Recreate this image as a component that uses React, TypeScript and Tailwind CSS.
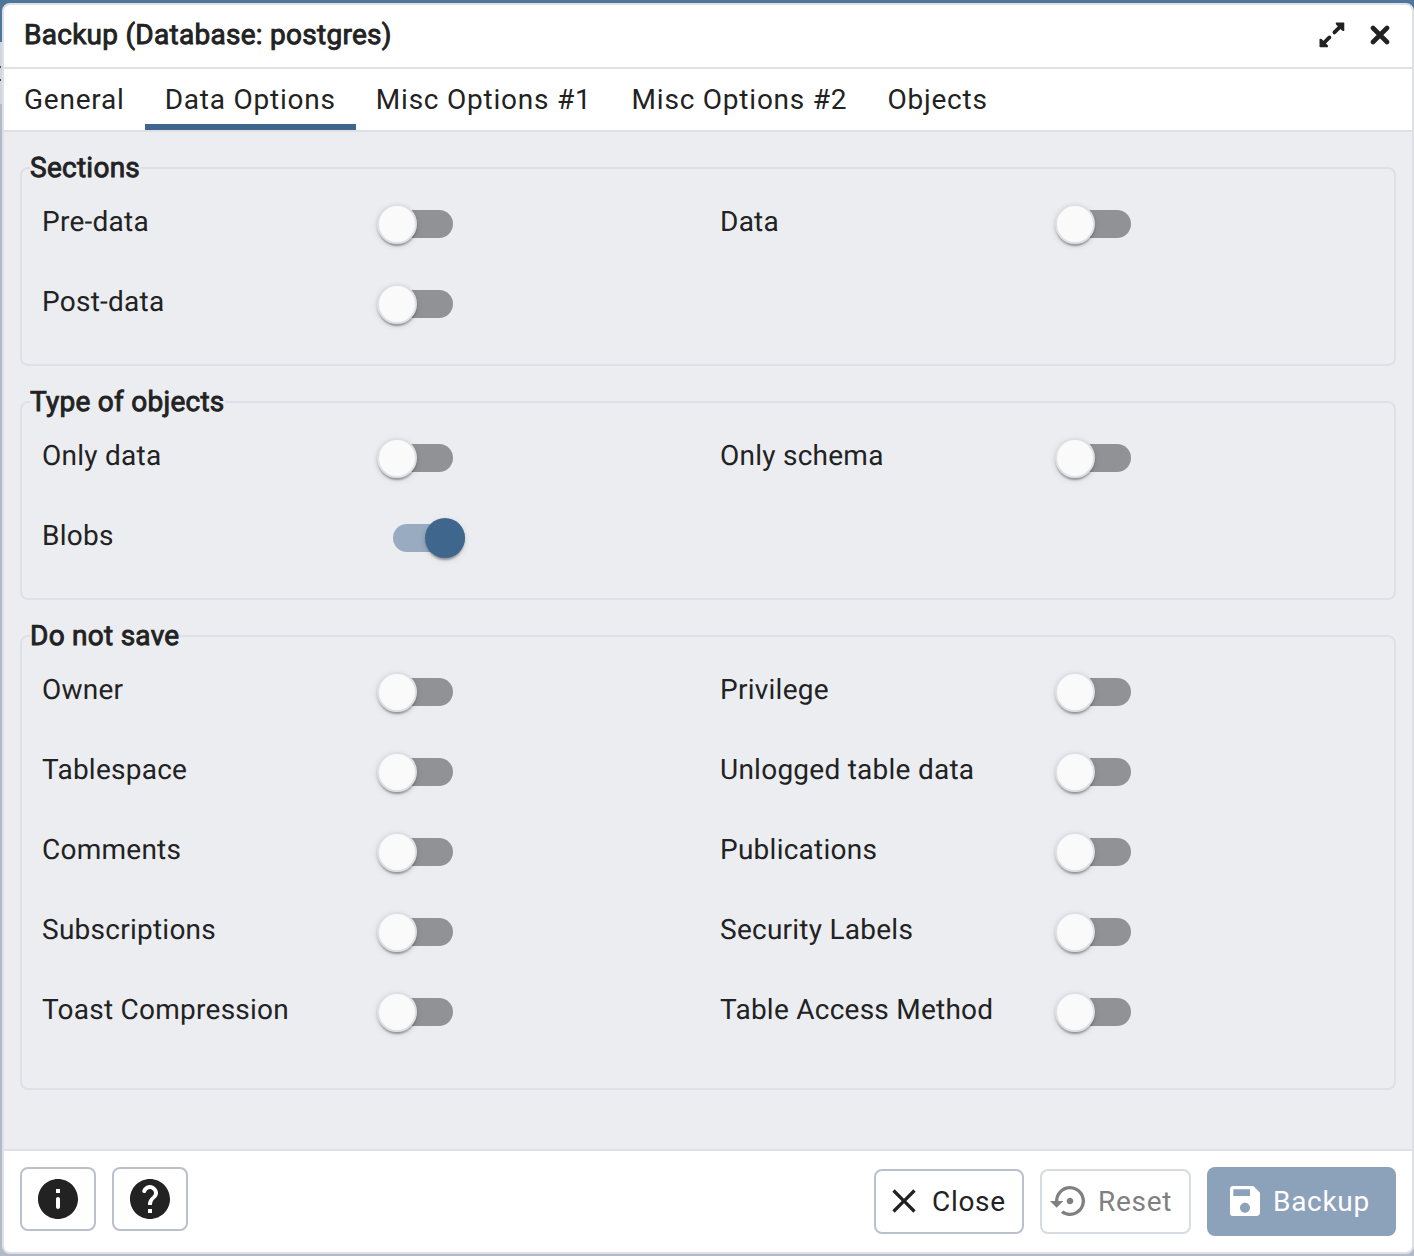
import { useState } from 'react'
import { MdClose, MdSave, MdSettingsBackupRestore } from 'react-icons/md'

const TABS = ['General', 'Data Options', 'Misc Options #1', 'Misc Options #2', 'Objects']

const GROUPS = [
  {
    title: 'Sections',
    className: 'h-[199px]',
    fields: ['Pre-data', 'Data', 'Post-data'],
  },
  {
    title: 'Type of objects',
    className: 'h-[199px]',
    fields: ['Only data', 'Only schema', 'Blobs'],
  },
  {
    title: 'Do not save',
    className: 'h-[455px]',
    fields: [
      'Owner',
      'Privilege',
      'Tablespace',
      'Unlogged table data',
      'Comments',
      'Publications',
      'Subscriptions',
      'Security Labels',
      'Toast Compression',
      'Table Access Method',
    ],
  },
]

function ExpandIcon() {
  return (
    <svg viewBox="0 0 26 26" className="size-[26px]" fill="currentColor" stroke="currentColor" strokeLinejoin="round">
      <path strokeWidth="1.4" d="M17.4 1.2h7.2v7.2l-1.4-.6-5.2-5.2z" />
      <path strokeWidth="1.4" d="M8.4 24.6H1.2v-7.2l1.4.6 5.2 5.2z" />
      <path strokeWidth="3.8" strokeLinecap="round" d="M22 3.8l-6.6 6.6M3.8 22l6.6-6.6" />
    </svg>
  )
}

function CrossIcon() {
  return (
    <svg viewBox="0 0 20 20" className="size-5" stroke="currentColor" strokeWidth="4.6" strokeLinecap="round">
      <path d="M3 3l14 14M17 3L3 17" />
    </svg>
  )
}

function InfoIcon() {
  return (
    <svg viewBox="0 0 24 24" className="size-12" fill="currentColor">
      <path d="M12 2C6.48 2 2 6.48 2 12s4.48 10 10 10 10-4.48 10-10S17.52 2 12 2zm0 15c-.55 0-1-.45-1-1v-4c0-.55.45-1 1-1s1 .45 1 1v4c0 .55-.45 1-1 1zm1-8h-2V7h2v2z" />
    </svg>
  )
}

function HelpIcon() {
  return (
    <svg viewBox="0 0 24 24" className="size-12" fill="currentColor">
      <path d="M12 2C6.48 2 2 6.48 2 12s4.48 10 10 10 10-4.48 10-10S17.52 2 12 2zm1 17h-2v-2h2v2zm2.07-7.75l-.9.92c-.5.51-.86.97-1.04 1.69-.08.32-.13.68-.13 1.14h-2v-.5c0-.46.08-.9.22-1.31.2-.58.53-1.1.95-1.52l1.24-1.26c.46-.44.68-1.1.55-1.8-.13-.72-.69-1.33-1.39-1.53-1.11-.31-2.14.32-2.47 1.27-.12.37-.43.65-.82.65h-.3C8.4 9 8 8.44 8.16 7.88c.43-1.47 1.68-2.59 3.23-2.83 1.52-.24 2.97.55 3.87 1.8 1.18 1.63.83 3.38-.19 4.4z" />
    </svg>
  )
}

function Switch({ label, on, onToggle }: { label: string; on: boolean; onToggle: () => void }) {
  return (
    <button
      role="switch"
      aria-checked={on}
      aria-label={label}
      onClick={onToggle}
      className={on ? 'flex items-center w-[72px] h-10 ml-4' : 'flex items-center w-[76px] h-10'}
    >
      <span
        className={
          on
            ? 'w-[72px] h-7 rounded-full bg-[#98abc1] flex items-center'
            : 'w-[72px] h-7 ml-1 rounded-full bg-[#919295] flex items-center'
        }
      >
        <span
          className={
            on
              ? 'size-10 shrink-0 ml-8 rounded-full bg-[#3f678e] shadow-[0_4px_2px_-2px_rgba(0,0,0,0.2),0_2px_2px_rgba(0,0,0,0.14),0_2px_6px_rgba(0,0,0,0.12)]'
              : 'size-10 shrink-0 -ml-1 rounded-full bg-[#fafafa] border-2 border-[#dfe0e6] shadow-[0_4px_2px_-2px_rgba(0,0,0,0.2),0_2px_2px_rgba(0,0,0,0.14),0_2px_6px_rgba(0,0,0,0.12)]'
          }
        />
      </span>
    </button>
  )
}

export default function App() {
  const [tab, setTab] = useState('Data Options')
  const [enabled, setEnabled] = useState<Record<string, boolean>>({ Blobs: true })

  return (
    <div className="w-[1414px] h-[1256px] flex bg-linear-to-b from-[#50759a] from-[42px] to-[#b2bac7] to-[42px] pt-[3px] pb-[2px] overflow-hidden font-[Roboto,sans-serif] text-[28px] leading-[42px] text-[#222222] [text-rendering:geometricPrecision]">
      {/* Sliver of the page behind the dialog */}
      <div className="w-[2px] shrink-0 pt-[39px]">
        <div className="h-[62px] bg-[#d3d6dd] pt-6">
          <div className="w-px h-[15px] border-y-2 border-[#4b4d52]" />
        </div>
      </div>
      <div className="flex-1 flex flex-col border-2 border-[#dee0e6] rounded-[8px] bg-white overflow-hidden">
        {/* Title bar */}
        <div className="h-16 shrink-0 flex items-center justify-between pl-5 pr-[22px] pb-0.5 border-b-2 border-[#dee0e6]">
          <h1 className="-mt-px [-webkit-text-stroke:0.9px_#222222] tracking-[0.27px]">Backup (Database: postgres)</h1>
          <div className="flex items-center gap-[25px]">
            <button aria-label="Maximize"><ExpandIcon /></button>
            <button aria-label="Close dialog"><CrossIcon /></button>
          </div>
        </div>

        {/* Tabs */}
        <div role="tablist" className="h-[63px] shrink-0 flex border-b-2 border-[#dee0e6] tracking-[0.78px]">
          {TABS.map((name) => (
            <button
              key={name}
              role="tab"
              aria-selected={tab === name}
              onClick={() => setTab(name)}
              className={
                tab === name
                  ? 'px-5 pt-1.5 border-b-6 border-[#3f678e] whitespace-nowrap'
                  : 'px-5 pt-1.5 border-b-6 border-transparent whitespace-nowrap'
              }
            >
              {name}
            </button>
          ))}
        </div>

        {/* Options */}
        <div className="flex-1 min-h-0 flex flex-col gap-[14px] bg-[#ebedf1] px-4 pt-[14px]">
          {GROUPS.map((group) => (
            <section key={group.title} className="flex flex-col">
              <h2 className="self-start h-[21px] -mb-[21px] z-10 ml-2 pt-px px-0.5 bg-[#ebedf1] [-webkit-text-stroke:0.9px_#222222] tracking-[0.26px]">
                <span className="block h-10 -mr-0.5 bg-[#ebedf1]">{group.title}</span>
              </h2>
              <div className={`mt-[21px] border-2 border-[#dee0e6] rounded-[8px] pt-[35px] pl-5 ${group.className}`}>
                <div className="grid grid-cols-[678px_678px] auto-rows-[80px]">
                  {group.fields.map((name) => (
                    <div key={name} className="flex items-start">
                      <span className="w-[335px] shrink-0 -mt-[3px] tracking-[0.25px]">{name}</span>
                      <Switch
                        label={name}
                        on={!!enabled[name]}
                        onToggle={() => setEnabled({ ...enabled, [name]: !enabled[name] })}
                      />
                    </div>
                  ))}
                </div>
              </div>
            </section>
          ))}
        </div>

        {/* Footer */}
        <div className="h-[103px] shrink-0 flex items-start gap-4 px-4 pt-4 border-t-2 border-[#dee0e6] tracking-[0.7px]">
          <button aria-label="Info" className="w-[76px] h-16 flex items-center justify-center border-2 border-[#bac1cd] rounded-[8px]">
            <InfoIcon />
          </button>
          <button aria-label="Help" className="w-[76px] h-16 flex items-center justify-center border-2 border-[#bac1cd] rounded-[8px]">
            <HelpIcon />
          </button>
          <div className="ml-auto flex items-center gap-4">
            <button className="w-[150px] h-[65px] pl-2 flex items-center gap-2 border-2 border-[#bac1cd] rounded-[8px]">
              <MdClose className="size-10 -mt-px" />
              Close
            </button>
            <button disabled className="w-[151px] h-[65px] pl-2 flex items-center gap-2 border-2 border-[#d7dbe2] rounded-[8px] text-[#808080]">
              <MdSettingsBackupRestore className="size-10 -mt-px" />
              Reset
            </button>
            <button disabled className="w-[189px] h-[69px] pl-[18px] flex items-center gap-2 bg-[#8ca2ba] rounded-[8px] text-white">
              <MdSave className="size-10 -mt-px" />
              Backup
            </button>
          </div>
        </div>
      </div>
    </div>
  )
}
